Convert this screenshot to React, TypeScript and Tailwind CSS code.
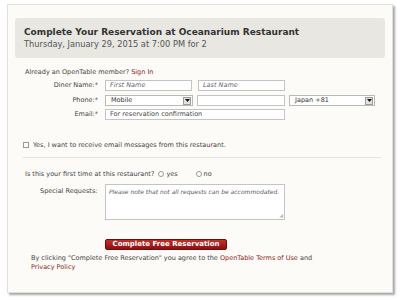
const font = { fontFamily: '"DejaVu Sans", Verdana, sans-serif' };

const SelectBox = ({ value, width }: { value: string; width: string }) => (
  <div className={`${width} h-[11px] border border-[#b9b9b9] bg-white flex items-center justify-between pl-[5px] pr-[1px]`}>
    <span className="text-[6.5px] text-[#333] leading-none">{value}</span>
    <span className="w-[8px] h-[8px] bg-[#e4e2dc] border border-[#9c9c9c] flex items-center justify-center">
      <svg width="5" height="3" viewBox="0 0 5 3">
        <path d="M0 0 H5 L2.5 3 Z" fill="#111" />
      </svg>
    </span>
  </div>
);

const TextBox = ({ placeholder, width, italic }: { placeholder?: string; width: string; italic?: boolean }) => (
  <div className={`${width} h-[11px] border border-[#c4c4c4] bg-white flex items-center pl-[4px]`}>
    <span className={`text-[6.5px] leading-none ${italic ? "italic text-[#666]" : "text-[#444]"}`}>{placeholder}</span>
  </div>
);

const Label = ({ text }: { text: string }) => (
  <div className="w-[80px] text-right text-[6.5px] text-[#444] pr-[7px] leading-none">{text}</div>
);

const Radio = () => <span className="inline-block w-[6px] h-[6px] rounded-full border border-[#999] bg-white mr-[2px]" />;

const App = () => {
  return (
    <div className="w-[400px] h-[300px] bg-white pt-[4px] pl-[7px]" style={font}>
      <div className="w-[386px] h-[289px] bg-[#fcfbf7] border border-[#e2e0da] shadow-[2px_2px_2px_rgba(0,0,0,0.35)] pt-[13px] px-[7px]">
        {/* header */}
        <div className="h-[40px] bg-[#e8e7e2] rounded-[3px] px-[9px] pt-[8px]">
          <h1 className="text-[9px] font-bold text-[#333] leading-[12px]">Complete Your Reservation at Oceanarium Restaurant</h1>
          <p className="text-[8.25px] text-[#555] leading-[12px]">Thursday, January 29, 2015 at 7:00 PM for 2</p>
        </div>

        <div className="pl-[10px] pt-[10px] text-[#444]">
          <p className="text-[6.5px] leading-[8px]">
            Already an OpenTable member? <span className="text-[#8a1c1c]">Sign In</span>
          </p>

          <div className="flex items-center mt-[4px]">
            <Label text="Diner Name:*" />
            <TextBox placeholder="First Name" width="w-[87px]" italic />
            <div className="w-[6px]" />
            <TextBox placeholder="Last Name" width="w-[87px]" italic />
          </div>

          <div className="flex items-center mt-[4px]">
            <Label text="Phone:*" />
            <SelectBox value="Mobile" width="w-[88px]" />
            <div className="w-[4px]" />
            <TextBox width="w-[88px]" />
            <div className="w-[4px]" />
            <SelectBox value="Japan +81" width="w-[86px]" />
          </div>

          <div className="flex items-center mt-[3px]">
            <Label text="Email:*" />
            <TextBox placeholder="For reservation confirmation" width="w-[180px]" />
          </div>

          <div className="flex items-center mt-[22px] -ml-[2px]">
            <span className="w-[6px] h-[6px] border border-[#999] bg-white mr-[4px]" />
            <span className="text-[6.5px] leading-none">Yes, I want to receive email messages from this restaurant.</span>
          </div>

          <div className="h-px bg-[#e6e4de] mt-[8px] mr-[4px] -ml-[2px]" />

          <div className="flex items-center mt-[13px] text-[6.5px] leading-none">
            <span>Is this your first time at this restaurant?</span>
            <span className="ml-[4px] flex items-center"><Radio />yes</span>
            <span className="ml-[18px] flex items-center"><Radio />no</span>
          </div>

          <div className="flex mt-[7px]">
            <div className="w-[80px] pl-[15px] pt-[4px] text-[6.5px] leading-none">Special Requests:</div>
            <div className="relative w-[180px] h-[36px] border border-[#c4c4c4] bg-white pl-[3px] pt-[4px]">
              <span className="text-[6px] italic text-[#555] leading-none block whitespace-nowrap">Please note that not all requests can be accommodated.</span>
              <span className="absolute right-[1px] bottom-[1px] text-[5px] text-[#bbb] leading-none">◢</span>
            </div>
          </div>

          <div className="flex pl-[80px] mt-[19px]">
            <button className="w-[122px] h-[11px] rounded-[2px] border border-[#6e0b0b] bg-gradient-to-b from-[#c0302c] to-[#8c1010] text-white text-[7px] font-bold leading-none">
              Complete Free Reservation
            </button>
          </div>

          <p className="text-[6.5px] leading-[9px] mt-[4px] pl-[6px]">
            By clicking "Complete Free Reservation" you agree to the <span className="text-[#8a1c1c]">OpenTable Terms of Use</span> and
            <br />
            <span className="text-[#8a1c1c]">Privacy Policy</span>
          </p>
        </div>
      </div>
    </div>
  );
};

export default App;
